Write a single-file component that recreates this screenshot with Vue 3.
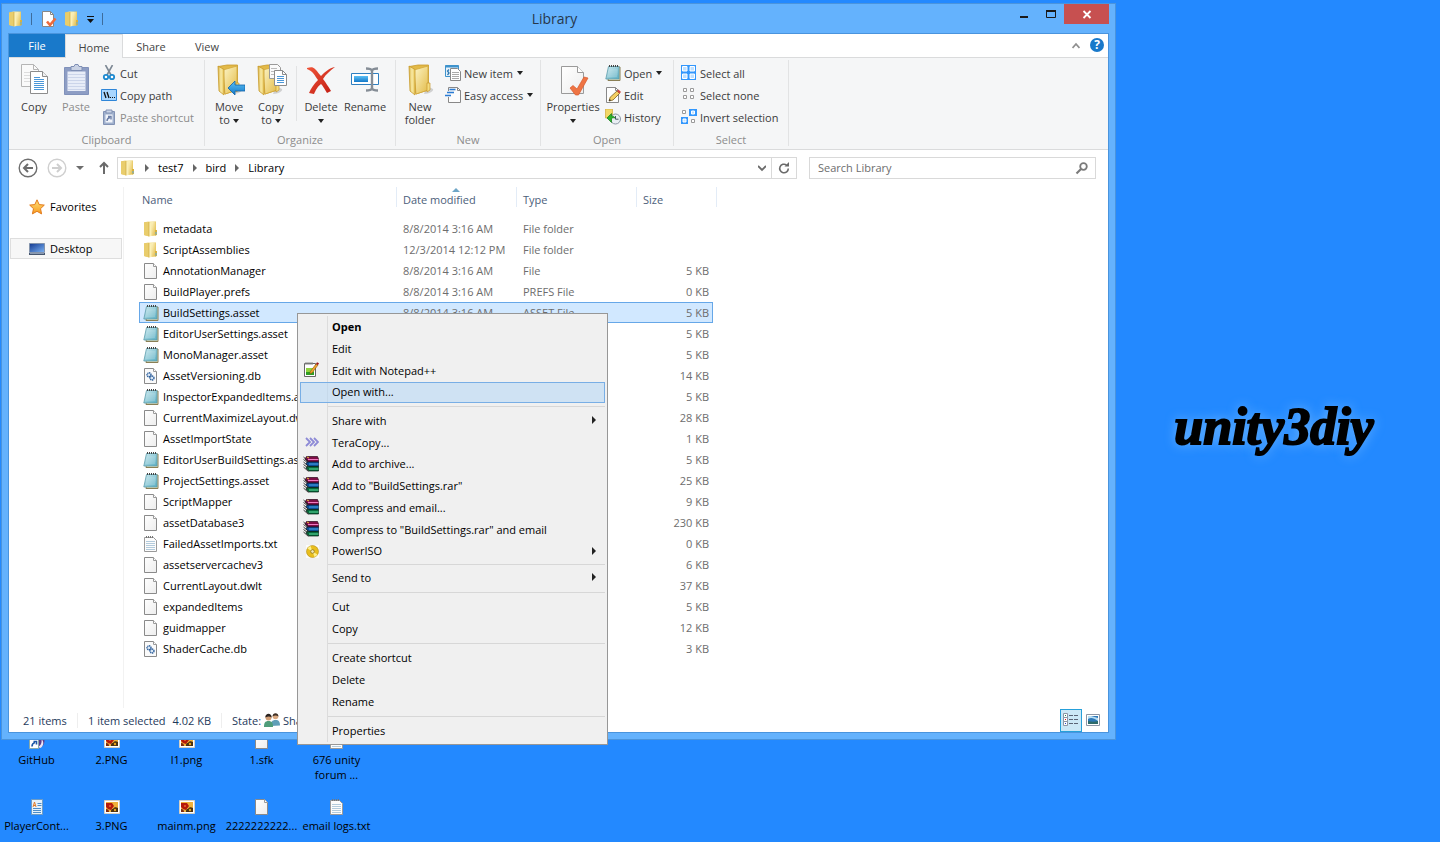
<script setup>
import { ref } from 'vue'

const search = ref('')

const files = [
  { name: 'metadata', date: '8/8/2014 3:16 AM', type: 'File folder', size: '', icon: 'folder' },
  { name: 'ScriptAssemblies', date: '12/3/2014 12:12 PM', type: 'File folder', size: '', icon: 'folder' },
  { name: 'AnnotationManager', date: '8/8/2014 3:16 AM', type: 'File', size: '5 KB', icon: 'page' },
  { name: 'BuildPlayer.prefs', date: '8/8/2014 3:16 AM', type: 'PREFS File', size: '0 KB', icon: 'page' },
  { name: 'BuildSettings.asset', date: '8/8/2014 3:16 AM', type: 'ASSET File', size: '5 KB', icon: 'notepad', selected: true },
  { name: 'EditorUserSettings.asset', size: '5 KB', icon: 'notepad' },
  { name: 'MonoManager.asset', size: '5 KB', icon: 'notepad' },
  { name: 'AssetVersioning.db', size: '14 KB', icon: 'gears' },
  { name: 'InspectorExpandedItems.asset', size: '5 KB', icon: 'notepad' },
  { name: 'CurrentMaximizeLayout.dwlt', size: '28 KB', icon: 'page' },
  { name: 'AssetImportState', size: '1 KB', icon: 'page' },
  { name: 'EditorUserBuildSettings.asset', size: '5 KB', icon: 'notepad' },
  { name: 'ProjectSettings.asset', size: '25 KB', icon: 'notepad' },
  { name: 'ScriptMapper', size: '9 KB', icon: 'page' },
  { name: 'assetDatabase3', size: '230 KB', icon: 'page' },
  { name: 'FailedAssetImports.txt', size: '0 KB', icon: 'text' },
  { name: 'assetservercachev3', size: '6 KB', icon: 'page' },
  { name: 'CurrentLayout.dwlt', size: '37 KB', icon: 'page' },
  { name: 'expandedItems', size: '5 KB', icon: 'page' },
  { name: 'guidmapper', size: '12 KB', icon: 'page' },
  { name: 'ShaderCache.db', size: '3 KB', icon: 'gears' },
]

const menu = [
  { label: 'Open', bold: true },
  { label: 'Edit' },
  { label: 'Edit with Notepad++', icon: 'npp' },
  { label: 'Open with...', hover: true, tight: true },
  { sep: true },
  { label: 'Share with', sub: true },
  { label: 'TeraCopy...', icon: 'tera' },
  { label: 'Add to archive...', icon: 'rar', tight: true },
  { label: 'Add to "BuildSettings.rar"', icon: 'rar' },
  { label: 'Compress and email...', icon: 'rar' },
  { label: 'Compress to "BuildSettings.rar" and email', icon: 'rar' },
  { label: 'PowerISO', icon: 'disc', sub: true, tight: true },
  { sep: true, tight: true },
  { label: 'Send to', sub: true },
  { sep: true },
  { label: 'Cut' },
  { label: 'Copy' },
  { sep: true },
  { label: 'Create shortcut' },
  { label: 'Delete' },
  { label: 'Rename' },
  { sep: true },
  { label: 'Properties' },
]

const shortcuts = [
  { label: 'GitHub', icon: 'github' },
  { label: '2.PNG', icon: 'image' },
  { label: 'l1.png', icon: 'image' },
  { label: '1.sfk', icon: 'page' },
  { label: '676 unity forum ...', icon: 'text' },
  { label: 'PlayerCont...', icon: 'doc' },
  { label: '3.PNG', icon: 'image' },
  { label: 'mainm.png', icon: 'image' },
  { label: '2222222222...', icon: 'page' },
  { label: 'email logs.txt', icon: 'text' },
]
</script>

<template>
  <!-- icon sprite -->
  <svg class="sprite" aria-hidden="true">
    <defs>
      <linearGradient id="gFold" x1="0" x2="1"><stop offset="0" stop-color="#d9b44a" /><stop offset=".5" stop-color="#f9eaa4" /><stop offset="1" stop-color="#e6c65c" /></linearGradient>
      <linearGradient id="gLeaf" x1="0" x2="1" y2="1"><stop offset="0" stop-color="#fdf6c9" /><stop offset="1" stop-color="#e3bb48" /></linearGradient>
      <linearGradient id="gPage" x1="0" x2="1" y2="1"><stop offset="0" stop-color="#fff" /><stop offset="1" stop-color="#ededed" /></linearGradient>
      <linearGradient id="gNote" x1="0" x2="1" y2="1"><stop offset="0" stop-color="#cdeaf0" /><stop offset="1" stop-color="#5aaec2" /></linearGradient>
      <linearGradient id="gBlue" x1="0" x2="0" y2="1"><stop offset="0" stop-color="#5cc0f5" /><stop offset="1" stop-color="#1479c9" /></linearGradient>
      <linearGradient id="gRed" x1="0" x2="1" y2="1"><stop offset="0" stop-color="#f0553a" /><stop offset="1" stop-color="#bf1a10" /></linearGradient>
      <linearGradient id="gScreen" x1="0" x2="1" y2="1"><stop offset="0" stop-color="#12388f" /><stop offset="1" stop-color="#7db4f5" /></linearGradient>
      <linearGradient id="gStar" x1="0" x2="0" y2="1"><stop offset="0" stop-color="#ffe27a" /><stop offset="1" stop-color="#f79a1e" /></linearGradient>
    </defs>
    <symbol id="folder" viewBox="0 0 16 16">
      <path d="M1 1.500 5 .5h8v14l-8 .5-4-1z" fill="url(#gFold)" />
      <path d="M1 1.500 6 1v14.500L1 14z" fill="#e9cd6c" />
      <path d="M6 1.500h2.500V15L6 15.500z" fill="#fbf0b6" />
      <path d="M8.500 1h4v13l-4 1z" fill="url(#gLeaf)" />
      <path d="M12 9h2v5l-2 .5z" fill="#d9b03c" /><path d="M12.500 11h1v2.500h-1z" fill="#5fb0e0" />
      <path d="M6 1v14.500" stroke="#c9a13a" stroke-width=".6" />
    </symbol>
    <symbol id="page" viewBox="0 0 16 16">
      <path d="M1.500.5h9l3 3v12h-12z" fill="url(#gPage)" stroke="#8a8a8a" />
      <path d="M10.500.5v3h3" fill="#fff" stroke="#9a9a9a" />
    </symbol>
    <symbol id="text" viewBox="0 0 16 16">
      <path d="M1.500 1.500h9l3 3v11h-12z" fill="#fcfcfc" stroke="#9a9a9a" />
      <path d="M3.500 0v2M5.500 0v2M7.500 0v2M9.500 0v2" stroke="#777" />
      <path d="M3 5.500h9M3 7.500h9M3 9.500h9M3 11.500h9M3 13.500h9" stroke="#b3cbdc" />
    </symbol>
    <symbol id="notepad" viewBox="0 0 16 16">
      <path d="M5 2h10v13.500H3z" fill="#e8dfb8" stroke="#8a7f55" />
      <path d="M3.500 1.500H14V14H.8z" fill="url(#gNote)" stroke="#5d9dac" stroke-width=".8" />
      <path d="M3.500 5h9M3 7h9.500M2.800 9h9.500M2.500 11h9.500" stroke="#e3f4f7" stroke-width=".6" opacity=".7" />
      <path d="M4.500 0v2M6.500 0v2M8.500 0v2M10.500 0v2M12.500 0v2" stroke="#444" />
    </symbol>
    <symbol id="gears" viewBox="0 0 16 16">
      <path d="M1.500.5h9l3 3v12h-12z" fill="#fafafa" stroke="#8a8a8a" /><path d="M10.500.5v3h3" fill="#fff" stroke="#9a9a9a" />
      <circle cx="6" cy="6.800" r="2" fill="#dce9f6" stroke="#2e5f9b" stroke-width="1.400" stroke-dasharray="1.2 .5" />
      <circle cx="9" cy="10" r="2" fill="#dce9f6" stroke="#2e5f9b" stroke-width="1.400" stroke-dasharray="1.2 .5" />
    </symbol>
    <symbol id="star" viewBox="0 0 16 16">
      <path d="m8 .8 2.200 4.800 5.100.5-3.800 3.600 1.100 5.200L8 12.300l-4.600 2.600 1.100-5.200L.7 6.100l5.100-.5z" fill="url(#gStar)" stroke="#e27a1c" />
    </symbol>
    <symbol id="desktop" viewBox="0 0 16 16">
      <path d="M.5 2.500h15v9H.5z" fill="url(#gScreen)" stroke="#8494ac" /><path d="M0 12h16v2H0z" fill="#46566e" /><path d="M1 12.500h14" stroke="#8a9ab2" />
    </symbol>
    <symbol id="npp" viewBox="0 0 16 16">
      <path d="M1.500 1.500h11v13h-11z" fill="#fff" stroke="#666" /><path d="M3 0v3M5 0v3M7 0v3M9 0v3" stroke="#888" />
      <path d="M3 6h8v7H3z" fill="#8fd23c" /><path d="M3 10h8v3H3z" fill="#2f9e22" />
      <path d="m7 10 6-8 2 1-6 8-2 .5z" fill="#f3a52c" stroke="#8a5510" stroke-width=".6" /><path d="m13 2 1-1.800 2 1-1 1.800z" fill="#a01515" />
    </symbol>
    <symbol id="tera" viewBox="0 0 16 16">
      <path d="m3 4 4 4-4 4M7 4l4 4-4 4M11 4l4 4-4 4" fill="none" stroke="#8d8ad6" stroke-width="1.800" />
    </symbol>
    <symbol id="rar" viewBox="0 0 16 16">
      <path d="M3.500.5h11l1 2.500v3H5L2 3z" fill="#7d0d46" stroke="#2a0a1a" stroke-width=".7" /><path d="M5 3.500h10.500" stroke="#f07ac0" />
      <path d="M4 6h11.500v4.500H6L3 8z" fill="#0b4f96" stroke="#061a33" stroke-width=".7" /><path d="M6 8h9.500" stroke="#4fa8ef" />
      <path d="M4 10.500h11.500V15H6L3 12z" fill="#06683a" stroke="#032013" stroke-width=".7" /><path d="M6 13h9.500" stroke="#5fe0a0" />
      <path d="m.5 1 4.500 4M.5 3.500l4 3M.5 6l4.500 4M.5 8.500l4 3M.5 11l5 4.500" stroke="#222" stroke-width=".9" /><path d="m4 1 2 1" stroke="#e8c838" />
    </symbol>
    <symbol id="disc" viewBox="0 0 16 16">
      <path d="M3 2h13v13H3z" fill="#fbfbfb" />
      <circle cx="9.500" cy="8.500" r="6" fill="#e9be1d" stroke="#b08a10" stroke-width=".6" />
      <path d="M9.500 8.500 4.500 5.500A6 6 0 0 1 7.500 2.900zM9.500 8.500l5 3a6 6 0 0 1-3 2.600z" fill="#fdf08a" />
      <circle cx="9.500" cy="8.500" r="1.800" fill="#f3e9b5" stroke="#8d7320" stroke-width=".8" />
    </symbol>
    <symbol id="cut" viewBox="0 0 16 16">
      <path d="m4.500 0 5.500 10M11.500 0 6 10" stroke="#7d8894" stroke-width="1.600" fill="none" />
      <circle cx="5" cy="12" r="2.200" fill="#fff" stroke="#1e8ad0" stroke-width="1.800" /><circle cx="11" cy="12" r="2.200" fill="#fff" stroke="#1e8ad0" stroke-width="1.800" />
    </symbol>
    <symbol id="copypath" viewBox="0 0 16 16">
      <path d="M.5 2.500h15v11H.5z" fill="#a9d6ff" stroke="#2f86d8" /><path d="m3 5 2 6M6 5l2 6" stroke="#111" stroke-width="1.300" /><path d="M9 10.500h1m1 0h1m1 0h1" stroke="#111" />
    </symbol>
    <symbol id="pasteshort" viewBox="0 0 16 16">
      <path d="M2.500 2.500h11v13h-11z" fill="#9fb0cd" stroke="#8292b4" /><path d="M5 1h6v3H5z" fill="#c9d3e6" stroke="#8292b4" /><path d="M4.500 5.500h7v8h-7z" fill="#f1f4fa" />
      <path d="M6 12c0-2 1-3 3-3.500M7 7.500h3v3" fill="none" stroke="#6a7da6" stroke-width="1.400" />
    </symbol>
    <symbol id="newitem" viewBox="0 0 16 16">
      <path d="M.5.5h13v11H.5z" fill="#e8f3fb" stroke="#3f93cc" /><path d="M.5.5h13v2H.5z" fill="#3f93cc" /><path d="M4 4.500 2.500 6 4 8l-1.500 2" fill="none" stroke="#2f7ab4" stroke-width="1.300" />
      <path d="M5.500 3.500h7l3 3v9h-10z" fill="#fff" stroke="#888" /><path d="M7 7.500h7M7 9.500h7M7 11.500h7M7 13.500h7" stroke="#aaa" />
    </symbol>
    <symbol id="easy" viewBox="0 0 16 16">
      <path d="M3.500.5h9l3 3v12h-12z" fill="#fcfcfc" stroke="#888" /><path d="M12.500.5v3h3" fill="none" stroke="#888" /><path d="M4.500 2.500h6M2 5.500h7M0 8.500h6" stroke="#f5f6f7" stroke-width="3" /><path d="M4.500 2.500h6M2 5.500h7M0 8.500h6" stroke="#2a7bd4" stroke-width="1.400" />
    </symbol>
    <symbol id="edit" viewBox="0 0 16 16">
      <path d="M1.500.5h9l3 3v12h-12z" fill="#fdfdfd" stroke="#888" /><path d="M10.500.5v3h3" fill="none" stroke="#888" />
      <path d="m4 14 1.200-3.800L12 4l2.500 2.500L8 13z" fill="#f5cf62" stroke="#7b6023" stroke-width=".8" /><path d="m12 4 1.500-1.500L16 5l-1.500 1.500z" fill="#d4473c" /><path d="m4 14 .7-2 1.300 1.300z" fill="#222" />
    </symbol>
    <symbol id="history" viewBox="0 0 16 16">
      <path d="M.5 0h7v9h-7z" fill="#f3d866" stroke="#d1a936" stroke-width=".7" /><circle cx="10.500" cy="10" r="5" fill="#e9eef3" stroke="#8b98a5" />
      <path d="M10.500 7v3.200h3" fill="none" stroke="#456" /><path d="M2 9 6.500 4.500V7c2 0 3 .7 3.500 2-1.500-.5-2.500-.2-3.500.5v4z" fill="#2bb52b" stroke="#14791a" stroke-width=".7" />
    </symbol>
    <symbol id="selall" viewBox="0 0 16 16">
      <path d="M0 0h15v15H0z" fill="#3297fd" /><path d="M1.500 1.500h4.500v4.500H1.500zM9 1.500h4.500v4.500H9zM1.500 9h4.500v4.500H1.500zM9 9h4.500v4.500H9z" fill="#bfe0ff" stroke="#fff" />
    </symbol>
    <symbol id="selnone" viewBox="0 0 16 16">
      <path d="M2.500 1.500h3v3h-3zM9.500 1.500h3v3h-3zM2.500 8.500h3v3h-3zM9.500 8.500h3v3h-3z" fill="#fff" stroke="#9a9a9a" />
    </symbol>
    <symbol id="selinv" viewBox="0 0 16 16">
      <path d="M1.500 1.500h3v3h-3zM10.500 10.500h3v3h-3z" fill="#fff" stroke="#9a9a9a" /><path d="M8 0h8v7H8zM0 8h7v7H0z" fill="#3297fd" /><path d="M10.500 2h3v3h-3zM2 10h3v3H2z" fill="#bfe0ff" stroke="#fff" />
    </symbol>
    <symbol id="proplite" viewBox="0 0 16 16">
      <path d="M1.500.5h8l3 3v12h-11z" fill="#fff" stroke="#888" /><path d="M9.500.5v3h3" fill="none" stroke="#888" /><path d="m6 10.500 3 3.500 5.500-6.500" fill="none" stroke="#ee6a3c" stroke-width="2.600" />
    </symbol>
    <symbol id="github" viewBox="0 0 16 16">
      <circle cx="8" cy="8" r="7.500" fill="#5b3d8f" /><path d="M8 14c4-1 5-4 4.500-8 3 3 2 7-1 9z" fill="#e9e4f5" /><path d="M.5 6.500h9v9h-9z" fill="#fff" stroke="#8aa" />
      <path d="M3 13.500c0-2.500 1-3.500 3-4M4.500 8.500h3v3" fill="none" stroke="#1c56a5" stroke-width="1.600" />
    </symbol>
    <symbol id="image" viewBox="0 0 16 16">
      <path d="M.5 1.500h15v13H.5z" fill="#fff" stroke="#d4cfc4" /><path d="M2 3h12v10H2z" fill="#f0b13a" /><path d="M2 4h6l2 3-3 4-3-1-2-2z" fill="#b5190c" /><circle cx="6" cy="7" r="1" fill="#e96a2a" />
      <path d="M7 13c0-3 1-3 2-3 1-2 3-2 5-1v4z" fill="#4a3010" /><path d="M2 10c2 0 3 1 3 3H2z" fill="#7d2a10" /><circle cx="11" cy="11" r="1.200" fill="#e8a21c" />
    </symbol>
    <symbol id="doc" viewBox="0 0 16 16">
      <path d="M2.500.5h11v15h-11z" fill="#e4f1fb" stroke="#6f9cc4" /><path d="m4 8 1.500-5L7 8M4.500 6.500h2" fill="none" stroke="#e07a28" /><path d="M8.500 4.500h4M8.500 6.500h4M4 9.500h8M4 11.500h8M4 13.500h8" stroke="#4d8dc9" />
    </symbol>
    <symbol id="users" viewBox="0 0 16 16">
      <path d="M7 14c0-4 1-6 4.500-6S16 10 16 13.500z" fill="#5f9fb8" /><circle cx="11.500" cy="4.500" r="2.800" fill="#d9a880" /><path d="M8.500 4.500c0-4.500 6-4.500 6 0-2-1.500-4-1.500-6 0z" fill="#3f3026" />
      <path d="M0 15c0-4 1-6 4.500-6S9 11 9 15z" fill="#4f9d7a" /><circle cx="4.500" cy="5.500" r="3" fill="#cf9c74" /><path d="M1.300 5.500c0-5 6.400-5 6.400 0-2-1.500-4-1.500-6.400 0z" fill="#2b2320" />
    </symbol>
    <symbol id="details" viewBox="0 0 16 16">
      <path d="M.5 1.500h4v4h-4zM.5 5.500h4v4h-4zM.5 9.500h4v4h-4z" fill="#fff" stroke="#8d96a5" /><path d="M2 3h1v1H2z" fill="#285" /><path d="M2 7h1v1H2z" fill="#d11" /><path d="M2 11h1v1H2z" fill="#24c" />
      <path d="M6 3.500h4m1 0h4M6 7.500h4m1 0h4M6 11.500h4m1 0h4" stroke="#5a6475" />
    </symbol>
    <symbol id="thumbs" viewBox="0 0 16 16">
      <path d="M1.500 2.500h13v11h-13z" fill="#fff" stroke="#8d96a5" /><path d="M3 4h10v8H3z" fill="#2d78b8" /><path d="M3 7c3-2 6-1 10 2V6L6 4H3z" fill="#b8def3" /><path d="M3 9c3 1 7 1 10 0v3H3z" fill="#2e6b6a" />
    </symbol>
    <symbol id="bigcopy" viewBox="0 0 32 32">
      <path d="M3.500.5h12l5 5v17h-17z" fill="#fafafa" stroke="#b5b5b5" /><path d="M15.500.5v5h5" fill="none" stroke="#b5b5b5" />
      <path d="M6 8.500h6M6 11.500h6M6 14.500h6M6 17.500h6" stroke="#ddd" />
      <path d="M12.500 7.500h12l5 5v17h-17z" fill="#fff" stroke="#8c8c8c" /><path d="M24.500 7.500v5h5" fill="#f1f1f1" stroke="#8c8c8c" />
      <path d="M16 13.500h6M16 15.500h10M16 17.500h10M16 19.500h10M16 21.500h10M16 23.500h10M16 25.500h10" stroke="#4b97d8" />
    </symbol>
    <symbol id="bigpaste" viewBox="0 0 32 32">
      <path d="M4.500 3.500h24v27h-24z" fill="#8d9dc4" stroke="#8091ba" /><path d="M7.500 7.500h18v19.500h-18z" fill="#e8edf8" />
      <path d="M8 10.500h17M8 13.500h17M8 16.500h17M8 19.500h17M8 22.500h17M8 25.500h17" stroke="#ccd5ea" /><path d="M11 2.500h3l1-2h3l1 2h3v4H11z" fill="#c9d2e4" stroke="#7f8fb4" />
    </symbol>
    <symbol id="bigfolder" viewBox="0 0 32 32">
      <path d="M20 30c5 0 10-3 9-5l-6-3z" fill="#aaa" opacity=".5" />
      <path d="M5.500 2.500 14 1h10.500v25L12 30z" fill="#e3ba48" stroke="#c89a2b" stroke-width=".8" />
      <path d="m10 6 14-4v24l-12 4z" fill="url(#gLeaf)" stroke="#d3a83a" stroke-width=".8" />
      <path d="m5 2 6 3.500V31l-5-4z" fill="url(#gFold)" stroke="#c89a2b" stroke-width=".8" /><path d="M23 19h3v7l-3 2z" fill="#f4dc7e" stroke="#c89a2b" stroke-width=".7" />
    </symbol>
    <symbol id="bigmove" viewBox="0 0 32 32">
      <use href="#bigfolder" x="0" y="0" width="32" height="32" /><path d="m15 24 7-7v4h10v6H22v4z" fill="url(#gBlue)" stroke="#0f62a8" stroke-width=".8" />
    </symbol>
    <symbol id="bigcopyto" viewBox="0 0 32 32">
      <use href="#bigfolder" x="-2" y="0" width="32" height="32" />
      <path d="M14.500.5h8l3 3v11h-11z" fill="#fafafa" stroke="#999" /><path d="M16 4.500h6M16 7.500h6M16 10.500h6" stroke="#bbb" />
      <path d="M19.500 6.500h8l4 4v11h-12z" fill="#fff" stroke="#8c8c8c" /><path d="M27.500 6.500v4h4" fill="none" stroke="#8c8c8c" /><path d="M22 12.500h7M22 14.500h7M22 16.500h7M22 18.500h7" stroke="#4b97d8" />
    </symbol>
    <symbol id="bigdelete" viewBox="0 0 32 32">
      <path d="M2 4c4-1 6-1 8 1 3 3 4 5 6 7 4-4 8-8 14-9-5 4-9 7-12 12 3 4 5 7 8 12l-4 2c-3-5-4-7-6-9-4 3-5 6-7 10l-5-1c2-5 5-9 9-13C10 12 8 7 2 5z" fill="url(#gRed)" />
    </symbol>
    <symbol id="bigrename" viewBox="0 0 32 32">
      <path d="M2.500 9.500h27v11h-27z" fill="#fff" stroke="#2f7fc0" /><path d="M5 12h14v6H5z" fill="url(#gBlue)" /><path d="M17 4.500c3 0 5 0 6 2 1-2 3-2 6-2M17 26.500c3 0 5 0 6-2 1 2 3 2 6 2M23 6v19" fill="none" stroke="#858d96" stroke-width="2.400" />
    </symbol>
    <symbol id="bigprops" viewBox="0 0 32 32">
      <path d="M4.500 2.500h16l6 6v21h-22z" fill="url(#gPage)" stroke="#9a9a9a" /><path d="M20.500 2.500v6h6" fill="#fff" stroke="#9a9a9a" />
      <path d="m13 24 3-2.500 4 3.500 7-12 4 1-9.500 17h-3z" fill="#ee7444" stroke="#d8592c" stroke-width=".7" />
    </symbol>
  </svg>

  <main class="screen">
    <section class="window">
      <header class="titlebar">
        <div class="quick">
          <svg class="ico"><use href="#folder" /></svg>
          <i class="bar"></i>
          <button aria-label="Properties"><svg class="ico"><use href="#proplite" /></svg></button>
          <button aria-label="New folder"><svg class="ico"><use href="#folder" /></svg></button>
          <button aria-label="Customize"><svg class="mini" viewBox="0 0 8 8"><path d="M0 1.500h7" stroke="#111" /><path d="M0 4h7L3.500 8z" fill="#111" /></svg></button>
          <i class="bar"></i>
        </div>
        <h1>Library</h1>
        <div class="controls">
          <button aria-label="Minimize"><svg viewBox="0 0 27 20"><path d="M10 13h8" stroke="#1a1a1a" stroke-width="2" /></svg></button>
          <button aria-label="Maximize"><svg viewBox="0 0 27 20"><path d="M9.500 7v6.500h9V7" fill="none" stroke="#1a1a1a" /><path d="M9 7h10" stroke="#1a1a1a" stroke-width="2" /></svg></button>
          <button class="close" aria-label="Close"><svg viewBox="0 0 45 20"><path d="m19.500 7 7 7m0-7-7 7" stroke="#fff" stroke-width="1.800" /></svg></button>
        </div>
      </header>

      <div class="content">
        <nav class="tabs">
          <button class="tab file">File</button>
          <button class="tab active">Home</button>
          <button class="tab">Share</button>
          <button class="tab">View</button>
          <span class="spacer"></span>
          <button class="collapse" aria-label="Minimize the Ribbon"><svg class="mini" viewBox="0 0 8 8"><path d="m.5 6 3.500-4 3.500 4" fill="none" stroke="#8f8f8f" stroke-width="1.800" /></svg></button>
          <button class="help" aria-label="Help">?</button>
        </nav>

        <div class="ribbon">
          <section class="group clipboard">
            <div class="tools">
              <button class="big"><svg><use href="#bigcopy" /></svg><span>Copy</span></button>
              <button class="big off"><svg><use href="#bigpaste" /></svg><span>Paste</span></button>
              <div class="stack">
                <button><svg class="ico"><use href="#cut" /></svg>Cut</button>
                <button><svg class="ico"><use href="#copypath" /></svg>Copy path</button>
                <button class="off"><svg class="ico"><use href="#pasteshort" /></svg>Paste shortcut</button>
              </div>
            </div>
            <h2>Clipboard</h2>
          </section>
          <section class="group organize">
            <div class="tools">
              <button class="big"><svg><use href="#bigmove" /></svg><span>Move<br>to <i class="caret"></i></span></button>
              <button class="big"><svg><use href="#bigcopyto" /></svg><span>Copy<br>to <i class="caret"></i></span></button>
              <i class="rule"></i>
              <button class="big"><svg><use href="#bigdelete" /></svg><span>Delete<br><i class="caret"></i></span></button>
              <button class="big"><svg><use href="#bigrename" /></svg><span>Rename</span></button>
            </div>
            <h2>Organize</h2>
          </section>
          <section class="group new">
            <div class="tools">
              <button class="big"><svg><use href="#bigfolder" /></svg><span>New<br>folder</span></button>
              <div class="stack">
                <button><svg class="ico"><use href="#newitem" /></svg>New item<i class="caret"></i></button>
                <button><svg class="ico"><use href="#easy" /></svg>Easy access<i class="caret"></i></button>
              </div>
            </div>
            <h2>New</h2>
          </section>
          <section class="group open">
            <div class="tools">
              <button class="big wide"><svg><use href="#bigprops" /></svg><span>Properties<br><i class="caret"></i></span></button>
              <div class="stack">
                <button><svg class="ico"><use href="#notepad" /></svg>Open<i class="caret"></i></button>
                <button><svg class="ico"><use href="#edit" /></svg>Edit</button>
                <button><svg class="ico"><use href="#history" /></svg>History</button>
              </div>
            </div>
            <h2>Open</h2>
          </section>
          <section class="group select">
            <div class="tools">
              <div class="stack">
                <button><svg class="ico"><use href="#selall" /></svg>Select all</button>
                <button><svg class="ico"><use href="#selnone" /></svg>Select none</button>
                <button><svg class="ico"><use href="#selinv" /></svg>Invert selection</button>
              </div>
            </div>
            <h2>Select</h2>
          </section>
        </div>

        <div class="location">
          <button aria-label="Back"><svg class="round" viewBox="0 0 20 20"><circle cx="10" cy="10" r="8.800" fill="none" stroke="#6e6e6e" stroke-width="1.400" /><path d="M15 10H6m4-4-4 4 4 4" fill="none" stroke="#6d6d6d" stroke-width="2" /></svg></button>
          <button aria-label="Forward"><svg class="round" viewBox="0 0 20 20"><circle cx="10" cy="10" r="8.800" fill="none" stroke="#cfcfcf" stroke-width="1.400" /><path d="M5 10h9m-4-4 4 4-4 4" fill="none" stroke="#cfcfcf" stroke-width="2" /></svg></button>
          <button aria-label="Recent locations"><svg class="mini" viewBox="0 0 8 8"><path d="M0 2h8L4 6z" fill="#6d6d6d" /></svg></button>
          <button class="up" aria-label="Up"><svg class="ico" viewBox="0 0 16 16"><path d="M8 14V3M4 7l4-4 4 4" fill="none" stroke="#6a6a6a" stroke-width="2" /></svg></button>
          <div class="address">
            <svg class="ico"><use href="#folder" /></svg>
            <i class="arrow"></i><button>test7</button>
            <i class="arrow"></i><button>bird</button>
            <i class="arrow"></i><button>Library</button>
            <span class="spacer"></span>
            <button class="drop" aria-label="Previous locations"><svg class="mini" viewBox="0 0 8 8"><path d="m0 2 4 4 4-4" fill="none" stroke="#6a6a6a" stroke-width="1.800" /></svg></button>
            <button class="refresh" aria-label="Refresh"><svg class="ico" viewBox="0 0 16 16"><path d="M10.500 5A4.300 4.300 0 1 0 12.300 8.500" fill="none" stroke="#6a6a6a" stroke-width="1.600" /><path d="M8.500 6.500H13V2z" fill="#6a6a6a" /></svg></button>
          </div>
          <label class="search">
            <input v-model="search" type="text" placeholder="Search Library" aria-label="Search Library">
            <svg class="ico" viewBox="0 0 16 16"><circle cx="10.500" cy="6.500" r="3.300" fill="none" stroke="#7a7a7a" stroke-width="1.800" /><path d="m8 9-4.500 4.500" stroke="#7a7a7a" stroke-width="2.200" /></svg>
          </label>
        </div>

        <div class="body">
          <aside class="places">
            <a href="#"><svg class="ico"><use href="#star" /></svg>Favorites</a>
            <a href="#" class="current"><svg class="ico"><use href="#desktop" /></svg>Desktop</a>
          </aside>
          <table class="files">
            <colgroup><col class="c-name"><col class="c-mid"><col class="c-mid"><col class="c-size"><col class="c-end"></colgroup>
            <thead>
              <tr>
                <th>Name</th>
                <th class="sorted">Date modified</th>
                <th>Type</th>
                <th>Size</th>
                <th></th>
              </tr>
            </thead>
            <tbody>
              <tr v-for="f in files" :key="f.name" :class="{ selected: f.selected }">
                <td><span class="name"><svg class="ico"><use :href="'#' + f.icon" /></svg>{{ f.name }}</span></td>
                <td>{{ f.date }}</td>
                <td>{{ f.type }}</td>
                <td class="size">{{ f.size }}</td>
                <td></td>
              </tr>
            </tbody>
          </table>
        </div>

        <footer class="status">
          <span class="count">21 items</span>
          <span class="picked">1 item selected<span>4.02 KB</span></span>
          <span class="state">State: <svg class="ico"><use href="#users" /></svg> Shared</span>
          <span class="spacer"></span>
          <button class="on" aria-label="Details"><svg class="ico"><use href="#details" /></svg></button>
          <button aria-label="Large icons"><svg class="ico"><use href="#thumbs" /></svg></button>
        </footer>
      </div>
    </section>

    <ul class="shortcuts">
      <li v-for="s in shortcuts" :key="s.label">
        <svg class="ico"><use :href="'#' + s.icon" /></svg>
        <span>{{ s.label }}</span>
      </li>
    </ul>

    <div class="wallpaper">unity3diy</div>

    <div class="menu" role="menu">
      <template v-for="(m, i) in menu" :key="i">
        <hr v-if="m.sep" :class="{ tight: m.tight }">
        <button v-else role="menuitem" :class="{ bold: m.bold, hover: m.hover, tight: m.tight }">
          <span class="gutter"><svg v-if="m.icon" class="ico"><use :href="'#' + m.icon" /></svg></span>
          {{ m.label }}
          <i v-if="m.sub" class="arrow"></i>
        </button>
      </template>
    </div>
  </main>
</template>

<style>
  body {
    background: #2389ff;
  }
</style>

<style scoped>
  * {
    box-sizing: border-box;
  }

  .sprite {
    position: absolute;
    width: 0;
    height: 0;
  }

  .screen {
    position: relative;
    display: grid;
    grid-template-columns: 1fr 324px;
    grid-template-rows: auto 1fr;
    min-height: 100vh;
    overflow: hidden;
    background: #2389ff;
    font-family: "Open Sans", "Noto Sans", sans-serif;
    font-size: 11px;
    line-height: 15px;
    color: #000;
  }

  button {
    border: 0;
    padding: 0;
    background: none;
    color: inherit;
    font: inherit;
    white-space: nowrap;
  }

  h1, h2 {
    margin: 0;
    font-weight: normal;
  }

  .ico {
    display: block;
    flex: none;
    width: 16px;
    height: 16px;
  }

  .mini {
    display: block;
    width: 8px;
    height: 8px;
  }

  .spacer {
    flex: 1;
  }

  .caret {
    display: inline-block;
    border: 3px solid transparent;
    border-top: 4px solid #222;
    border-bottom: 0;
    vertical-align: middle;
  }

  .arrow {
    border: 4px solid transparent;
    border-left: 4px solid #666;
    border-right: 0;
  }

  /* window frame */
  .window {
    position: relative;
    z-index: 1;
    margin: 3px 0 0 1px;
    padding: 0 6px 6px;
    border: 1px solid #4a94dd;
    background: #64b2fd;
  }

  .titlebar {
    display: grid;
    grid-template-columns: 1fr auto 1fr;
    height: 29px;
  }

  .titlebar h1 {
    padding-right: 8px;
    font-size: 14px;
    line-height: 30px;
    color: #27384b;
  }

  .quick {
    display: flex;
    align-items: center;
    gap: 7px;
  }

  .quick .bar {
    width: 1px;
    height: 12px;
    margin-right: 2px;
    background: #3d6c9c;
  }

  .controls {
    display: flex;
    justify-content: flex-end;
    align-items: flex-start;
  }

  .controls svg {
    display: block;
    width: 27px;
    height: 20px;
  }

  .controls .close svg {
    width: 45px;
    background: #c75050;
  }

  .content {
    border: 1px solid #4a94dd;
    background: #fff;
  }

  /* ribbon */
  .tabs {
    display: flex;
    height: 24px;
    border-bottom: 1px solid #dadbdc;
  }

  .tab {
    width: 56px;
    padding-top: 2px;
    color: #444;
  }

  .tab.file {
    height: 23px;
    padding-top: 0;
    background: #1979ca;
    color: #fff;
  }

  .tab.active {
    width: 58px;
    height: 24px;
    border: 1px solid #dadbdc;
    border-bottom: 0;
    background: #f5f6f7;
  }

  .collapse {
    padding: 0 10px;
  }

  .help {
    width: 14px;
    height: 14px;
    margin: 4px 4px 0 0;
    border-radius: 50%;
    background: #1979ca;
    color: #fff;
    font-size: 12px;
    font-weight: bold;
    line-height: 14px;
  }

  .ribbon {
    display: flex;
    height: 92px;
    padding: 2px 0 3px;
    border-bottom: 1px solid #dadbdc;
    background: #f5f6f7;
    color: #3b3b3b;
  }

  .group {
    display: flex;
    flex-direction: column;
    justify-content: space-between;
    border-right: 1px solid #e2e3e4;
  }

  .clipboard { width: 196px; }
  .organize { width: 191px; }
  .new { width: 145px; }
  .open { width: 133px; }
  .select { width: 115px; }

  .group h2 {
    margin-bottom: -2px;
    font-size: 11px;
    line-height: 16px;
    text-align: center;
    color: #8c8c8c;
  }

  .tools {
    display: flex;
    padding: 4px 0 0 3px;
  }

  .clipboard .tools,
  .open .tools {
    padding-left: 4px;
  }

  .big {
    display: flex;
    flex-direction: column;
    align-items: center;
    width: 42px;
    line-height: 13px;
  }

  .big svg {
    width: 32px;
    height: 32px;
    margin-bottom: 4px;
  }

  .big.wide {
    width: 56px;
  }

  .organize .big:last-child {
    width: 46px;
  }

  .off {
    color: #8c8c8c;
  }

  .rule {
    width: 1px;
    height: 55px;
    margin: 2px 3px 0 4px;
    background: #e2e3e4;
  }

  .stack {
    margin-top: -2px;
    padding-left: 4px;
  }

  .stack button {
    display: flex;
    align-items: center;
    gap: 3px;
    height: 22px;
  }

  .stack .caret {
    margin-left: 1px;
  }

  /* address bar */
  .location {
    display: flex;
    align-items: center;
    height: 36px;
    padding: 0 12px 0 9px;
    gap: 9px;
  }

  .round {
    display: block;
    width: 20px;
    height: 20px;
  }

  .up {
    margin: 0 -4px 0 3px;
  }

  .address {
    display: flex;
    flex: 1;
    align-items: center;
    gap: 9px;
    height: 22px;
    margin-right: 3px;
    padding: 0 0 1px 2px;
    border: 1px solid #d9d9d9;
  }

  .refresh {
    display: grid;
    place-items: center;
    width: 25px;
    height: 20px;
    margin: 0 0 -1px -4px;
    border-left: 1px solid #d9d9d9;
  }

  .search {
    display: flex;
    align-items: center;
    width: 287px;
    height: 22px;
    padding: 0 6px 1px 8px;
    border: 1px solid #d9d9d9;
  }

  .search input {
    flex: 1;
    min-width: 0;
    padding: 0;
    border: 0;
    outline: 0;
    font: inherit;
  }

  .search input::placeholder {
    color: #6d6d6d;
    opacity: 1;
  }

  /* files */
  .body {
    display: flex;
    padding-top: 1px;
  }

  .places {
    width: 115px;
    padding: 9px 1px 0;
    border-right: 1px solid #f2f2f2;
  }

  .places a {
    display: flex;
    align-items: center;
    gap: 5px;
    height: 21px;
    margin-bottom: 21px;
    padding-left: 18px;
    border: 1px solid transparent;
    color: #000;
    text-decoration: none;
  }

  .places .current {
    border-color: #dedede;
    background: #f7f7f7;
  }

  .files {
    align-self: flex-start;
    width: 578px;
    margin: 0 0 49px 15px;
    border-collapse: collapse;
    table-layout: fixed;
  }

  .c-name { width: 257px; }
  .c-mid { width: 120px; }
  .c-size { width: 77px; }
  .c-end { width: 4px; }

  .files th {
    position: relative;
    height: 31px;
    padding: 0 0 7px 3px;
    font-weight: normal;
    text-align: left;
    color: #4c607a;
  }

  .files th + th {
    padding-left: 7px;
    background: linear-gradient(#e3ecf7, #e3ecf7) left top / 1px 20px no-repeat;
  }

  .files th:last-child {
    padding-left: 0;
    background-position: right top;
  }

  .sorted::before {
    content: "";
    position: absolute;
    top: 1px;
    left: calc(50% - 4px);
    border: 4px solid transparent;
    border-top: 0;
    border-bottom: 4px solid #6ea5c6;
  }

  .files td {
    height: 21px;
    padding: 0 0 0 7px;
    color: #6d6d6d;
    white-space: nowrap;
  }

  .files td:first-child {
    padding-left: 4px;
    color: #000;
  }

  .files td.size {
    padding-right: 4px;
    text-align: right;
  }

  .name {
    display: flex;
    align-items: center;
    gap: 4px;
  }

  .selected td:not(:last-child) {
    background: #d1e8ff;
    box-shadow: inset 0 1px #66a7e8, inset 0 -1px #66a7e8;
  }

  .selected td:first-child {
    box-shadow: inset 0 1px #66a7e8, inset 0 -1px #66a7e8, inset 1px 0 #66a7e8;
  }

  .selected td.size {
    box-shadow: inset 0 1px #66a7e8, inset 0 -1px #66a7e8, inset -1px 0 #66a7e8;
  }

  .status {
    display: flex;
    align-items: center;
    height: 24px;
    padding: 0 4px 0 14px;
    color: #1e395b;
  }

  .count {
    width: 55px;
    border-right: 1px solid #eee;
  }

  .picked {
    display: flex;
    justify-content: space-between;
    width: 144px;
    padding: 0 10px;
    border-right: 1px solid #eee;
  }

  .state {
    display: flex;
    align-items: center;
    gap: 3px;
    padding-left: 10px;
  }

  .status button {
    display: grid;
    place-items: center;
    width: 22px;
    height: 23px;
  }

  .status .on {
    border: 1px solid #26a0da;
    background: #cce8f6;
  }

  /* desktop */
  .shortcuts {
    display: grid;
    grid-template-columns: repeat(5, 75px);
    grid-auto-rows: 66px;
    align-content: start;
    margin: -7px 0 0 -1px;
    padding: 0;
    list-style: none;
    text-align: center;
  }

  .shortcuts li {
    display: flex;
    flex-direction: column;
    align-items: center;
    gap: 3px;
  }

  .shortcuts span {
    max-width: 75px;
  }

  .wallpaper {
    grid-area: 1 / 2 / 3 / 3;
    place-self: center;
    padding: 0 8px 12px 0;
    font-family: "Liberation Serif", serif;
    font-size: 52px;
    font-style: italic;
    font-weight: bold;
    line-height: 60px;
    -webkit-text-stroke: 2px #000;
    text-shadow: 0 0 12px #7dc0ff;
  }

  /* context menu */
  .menu {
    position: absolute;
    z-index: 2;
    top: 313px;
    left: 297px;
    display: flex;
    flex-direction: column;
    width: 311px;
    padding: 2px;
    border: 1px solid #979797;
    background: linear-gradient(#dcdcdc, #dcdcdc) 29px 2px / 1px calc(100% - 4px) no-repeat #f0f0f0;
  }

  .menu button {
    display: flex;
    align-items: center;
    height: 22px;
    padding: 0 9px 2px 0;
    text-align: left;
  }

  .menu .tight {
    height: 21px;
  }

  .menu .gutter {
    width: 32px;
    padding-left: 3px;
  }

  .menu .bold {
    font-weight: bold;
  }

  .menu .hover {
    background: rgba(180, 215, 245, 0.55);
    box-shadow: inset 0 0 0 1px #78aee5;
  }

  .menu .arrow {
    margin-left: auto;
    border-left-color: #222;
  }

  .menu hr {
    height: 1px;
    margin: 3px 0 3px 28px;
    border: 0;
    background: #d7d7d7;
  }

  .menu hr.tight {
    height: 1px;
    margin-top: 2px;
    margin-bottom: 2px;
  }
</style>
